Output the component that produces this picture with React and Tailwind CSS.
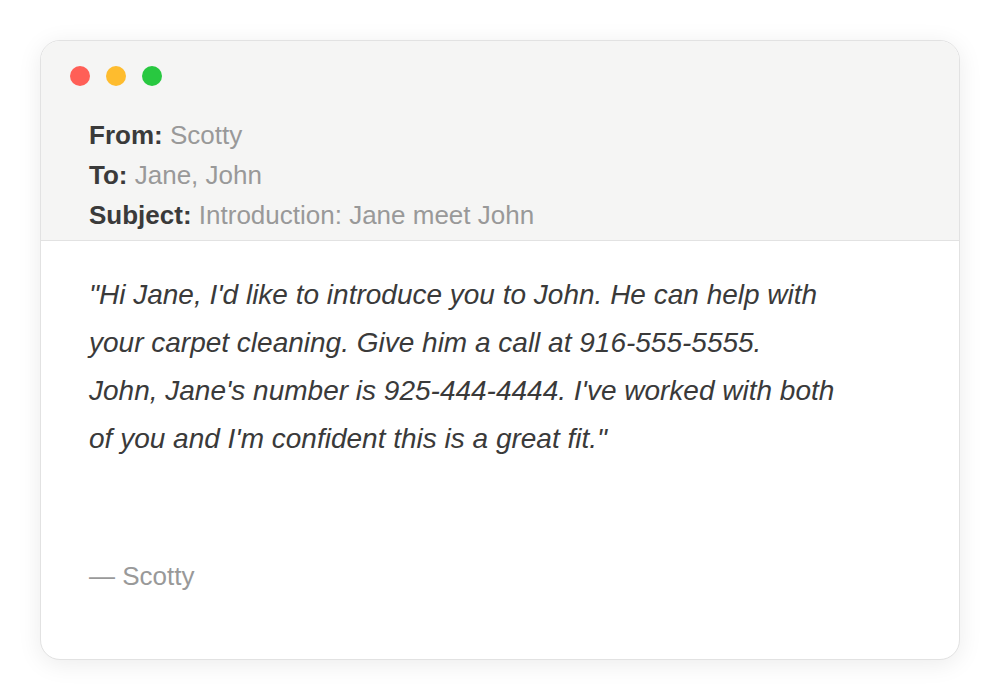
export default function App() {
  return (
    <div className="w-[1000px] h-[700px] bg-white flex items-start justify-center pt-10" style={{ fontFamily: '"Liberation Sans", Arial, sans-serif' }}>
      <div className="w-[920px] h-[620px] rounded-[20px] border border-[#e2e2e2] bg-white overflow-hidden shadow-[0_4px_24px_rgba(0,0,0,0.08)] flex flex-col">
        <div className="bg-[#f5f5f4] border-b border-[#e2e2e2] pt-[25px] pb-[5px] px-[48px]">
          <div className="flex gap-4 -ml-[19px]">
            <span className="w-5 h-5 rounded-full bg-[#ff5f57]" />
            <span className="w-5 h-5 rounded-full bg-[#febc2e]" />
            <span className="w-5 h-5 rounded-full bg-[#28c840]" />
          </div>
          <div className="mt-[29px] text-[26px] leading-[40px]">
            <div><span className="font-bold text-[#3a3a3a]">From:</span> <span className="text-[#999]">Scotty</span></div>
            <div><span className="font-bold text-[#3a3a3a]">To:</span> <span className="text-[#999]">Jane, John</span></div>
            <div><span className="font-bold text-[#3a3a3a]">Subject:</span> <span className="text-[#999]">Introduction: Jane meet John</span></div>
          </div>
        </div>
        <div className="px-[48px] pt-[30px]">
          <p className="italic text-[28px] leading-[48px] text-[#3a3a3a] whitespace-nowrap">
            "Hi Jane, I'd like to introduce you to John. He can help with<br />
            your carpet cleaning. Give him a call at 916-555-5555.<br />
            John, Jane's number is 925-444-4444. I've worked with both<br />
            of you and I'm confident this is a great fit."
          </p>
          <p className="mt-[93px] text-[26px] leading-[40px] text-[#999]">— Scotty</p>
        </div>
      </div>
    </div>
  );
}
